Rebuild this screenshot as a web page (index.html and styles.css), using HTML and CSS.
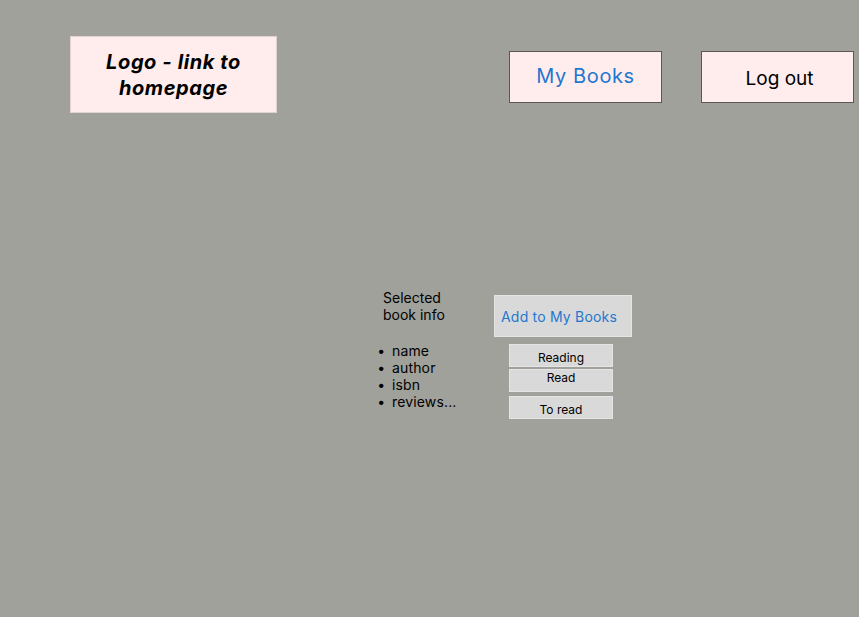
FILE: index.html
```html
<!DOCTYPE html>
<html lang="en">
<head>
<meta charset="utf-8">
<title>Book</title>
<link rel="stylesheet" href="styles.css">
</head>
<body>
<header class="header">
  <a class="logo" href="#">Logo - link to homepage</a>
  <nav class="nav">
    <a class="nav-btn nav-books" href="#">My Books</a>
    <a class="nav-btn nav-logout" href="#">Log out</a>
  </nav>
</header>
<main class="main">
  <section class="info">
    <p class="info-title">Selected<br>book info</p>
    <ul class="info-list">
      <li>name</li>
      <li>author</li>
      <li>isbn</li>
      <li>reviews...</li>
    </ul>
  </section>
  <section class="actions">
    <button class="add-btn">Add to My Books</button>
    <div class="status">
      <button class="status-btn">Reading</button>
      <button class="status-btn status-read">Read</button>
      <button class="status-btn status-toread">To read</button>
    </div>
  </section>
</main>
</body>
</html>
```

FILE: styles.css
```css
html, body {
  margin: 0;
  height: 100%;
}
body {
  background: #a1a19b;
  font-family: Inter, "Noto Sans", sans-serif;
  color: #000;
}
.header {
  display: flex;
  align-items: flex-start;
  padding: 36px 5px 0 70px;
}
.logo {
  box-sizing: border-box;
  width: 207px;
  height: 77px;
  background: #ffecec;
  border: 1px solid #e2d2d2;
  display: flex;
  align-items: center;
  justify-content: center;
  text-align: center;
  font-size: 20px;
  line-height: 26px;
  font-weight: 700;
  font-style: italic;
  letter-spacing: 0.6px;
  color: #000;
  text-decoration: none;
  padding: 0 20px;
}
.nav {
  margin-left: auto;
  margin-top: 15px;
  display: flex;
  gap: 39px;
}
.nav-btn {
  box-sizing: border-box;
  width: 153px;
  height: 52px;
  background: #ffecec;
  border: 1px solid #5d5656;
  display: flex;
  align-items: center;
  justify-content: center;
  font-size: 20px;
  text-decoration: none;
}
.nav-books {
  color: #1f77d0;
  padding-bottom: 2px;
  letter-spacing: 0.6px;
}
.nav-logout {
  color: #000;
  font-size: 19px;
  padding: 3px 0 0 4px;
}
.main {
  display: flex;
  padding: 176px 0 0 383px;
}
.info {
  width: 111px;
  font-size: 14px;
  line-height: 17px;
}
.info-title {
  margin: 0;
}
.info-list {
  margin: 19px 0 0;
  padding-left: 9px;
  letter-spacing: 0.15px;
  list-style-type: "\2022\00a0\2009";
}
.actions {
  padding-top: 6px;
  display: flex;
  flex-direction: column;
  align-items: flex-start;
}
button {
  font-family: inherit;
  cursor: pointer;
}
.add-btn {
  box-sizing: border-box;
  width: 138px;
  height: 42px;
  background: #d9d9d9;
  border: 1px solid #e4e4e4;
  padding: 0 0 0 6px;
  text-align: left;
  font-size: 14px;
  letter-spacing: 0.2px;
  color: #1f77d0;
}
.status {
  margin: 7px 0 0 15px;
  display: flex;
  flex-direction: column;
}
.status-btn {
  box-sizing: border-box;
  width: 104px;
  height: 23px;
  background: #d9d9d9;
  border: 1px solid #e4e4e4;
  padding: 3px 0 0;
  font-size: 12px;
  color: #000;
}
.status-read {
  margin-top: 2px;
  padding: 0 0 6px;
}
.status-toread {
  margin-top: 4px;
}
```
